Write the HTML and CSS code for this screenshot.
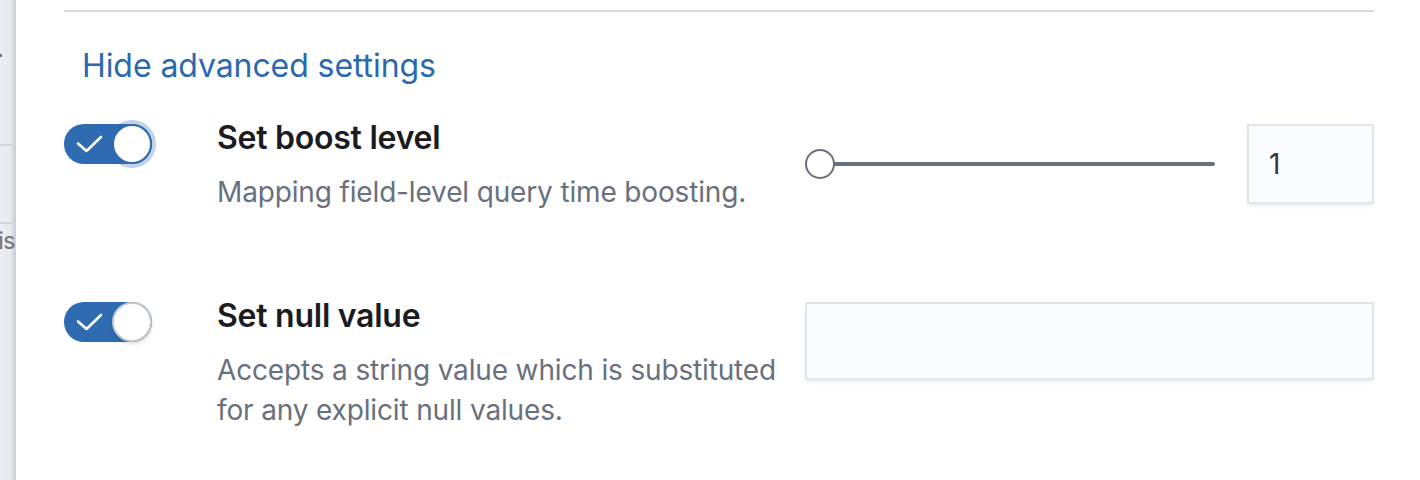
FILE: index.html
```html
<!DOCTYPE html>
<html>
<head>
<meta charset="utf-8">
<link rel="stylesheet" href="styles.css">
</head>
<body>
<div class="page">
  <aside class="backdrop">
    <span class="mark"></span>
    <div class="rule rule-a"></div>
    <div class="rule rule-b"></div>
    <div class="ghost"><span>This</span></div>
  </aside>
  <main class="panel">
    <div class="divider"></div>
    <a class="link">Hide advanced settings</a>

    <div class="row">
      <div class="switch-cell">
        <span class="switch">
          <svg class="check" width="28" height="18" viewBox="0 0 28 18"><path d="M2 8.5 L10.5 16 L25 2" fill="none" stroke="#fff" stroke-width="2.6" stroke-linecap="round" stroke-linejoin="round"/></svg>
          <span class="thumb thumb-focus"></span>
        </span>
      </div>
      <div class="text">
        <h3 class="title">Set boost level</h3>
        <p class="desc">Mapping field-level query time boosting.</p>
      </div>
      <div class="control">
        <div class="range">
          <span class="range-thumb"></span>
          <span class="range-track"></span>
        </div>
        <div class="field field-num">1</div>
      </div>
    </div>

    <div class="row row-second">
      <div class="switch-cell">
        <span class="switch">
          <svg class="check" width="28" height="18" viewBox="0 0 28 18"><path d="M2 8.5 L10.5 16 L25 2" fill="none" stroke="#fff" stroke-width="2.6" stroke-linecap="round" stroke-linejoin="round"/></svg>
          <span class="thumb thumb-plain"></span>
        </span>
      </div>
      <div class="text">
        <h3 class="title">Set null value</h3>
        <p class="desc">Accepts a string value which is substituted for any explicit null values.</p>
      </div>
      <div class="control">
        <div class="field field-text"></div>
      </div>
    </div>
  </main>
</div>
</body>
</html>
```

FILE: styles.css
```css
* { box-sizing: border-box; }

html, body {
  margin: 0;
  padding: 0;
  background: #ffffff;
  font-family: Inter, "Liberation Sans", sans-serif;
}

.page {
  display: flex;
  width: 1420px;
  height: 480px;
  overflow: hidden;
}

/* left backdrop strip */
.backdrop {
  flex: 0 0 16px;
  width: 16px;
  height: 480px;
  display: flex;
  flex-direction: column;
  overflow: hidden;
  background: linear-gradient(to right, #eceef2 0, #e6e8ec 11px, #d6d9df 13px, #c9ccd3 16px);
}

.mark {
  display: block;
  width: 2px;
  height: 3px;
  margin-top: 54px;
  background: #6b707a;
}

.rule {
  height: 2px;
  width: 14px;
  background: #d3d6dc;
}

.rule-a { margin-top: 87px; }
.rule-b { margin-top: 76px; }

.ghost {
  margin-top: 4px;
  width: 15px;
  display: flex;
  justify-content: flex-end;
  overflow: hidden;
  font-size: 23px;
  line-height: 26px;
  letter-spacing: -0.5px;
  color: #6e737c;
  white-space: nowrap;
}

.ghost span { flex: 0 0 auto; }

/* main panel */
.panel {
  flex: 1 1 auto;
  padding: 10px 46px 0 48px;
}

.divider {
  height: 2px;
  background: #d3dae6;
}

.link {
  display: inline-block;
  margin-top: 30px;
  padding-left: 18px;
  font-size: 32px;
  line-height: 48px;
  letter-spacing: -0.08px;
  color: #2a69b0;
  text-decoration: none;
}

.row {
  display: flex;
  align-items: flex-start;
  margin-top: 24px;
}

.row-second { margin-top: 80px; }

.switch-cell {
  flex: 0 0 153px;
  padding-top: 10px;
}

.switch {
  display: flex;
  align-items: center;
  width: 88px;
  height: 40px;
  border-radius: 20px;
  background: #2e6bb1;
  padding-left: 12px;
}

.check { display: block; }

.thumb {
  margin-left: auto;
  width: 40px;
  height: 40px;
  border-radius: 50%;
  background: #ffffff;
}

.thumb-focus {
  border: 2px solid #2e6bb1;
  box-shadow: 0 0 0 4px rgba(46, 107, 177, 0.3);
}

.thumb-plain {
  border: 2px solid #c4c8cf;
  box-shadow: 0 2px 4px rgba(0, 0, 0, 0.12);
}

.text {
  flex: 0 0 572px;
}

.title {
  margin: 0;
  font-size: 32px;
  line-height: 48px;
  font-weight: 600;
  letter-spacing: -0.25px;
  color: #1a1c21;
}

.desc {
  margin: 10px 0 0;
  font-size: 28px;
  line-height: 40px;
  letter-spacing: -0.15px;
  color: #69707d;
}

.control {
  flex: 1 1 auto;
  margin-left: 16px;
  padding-top: 10px;
  display: flex;
  align-items: center;
  gap: 32px;
}

.range {
  flex: 1 1 auto;
  height: 80px;
  display: flex;
  align-items: center;
}

.range-thumb {
  flex: 0 0 30px;
  width: 30px;
  height: 30px;
  border-radius: 50%;
  border: 2px solid #69707d;
  background: #ffffff;
  position: relative;
  z-index: 1;
}

.range-track {
  flex: 1 1 auto;
  height: 4px;
  margin-left: -2px;
  border-radius: 2px;
  background: #69707d;
}

.field {
  height: 80px;
  background: #fbfcfd;
  box-shadow: inset 0 0 0 2px #e1e4eb, 0 3px 4px -2px rgba(152, 162, 179, 0.3);
}

.field-num {
  flex: 0 0 127px;
  display: flex;
  align-items: center;
  padding-left: 22px;
  font-size: 28px;
  color: #343741;
}

.field-text {
  flex: 1 1 auto;
  height: 78px;
}
```
